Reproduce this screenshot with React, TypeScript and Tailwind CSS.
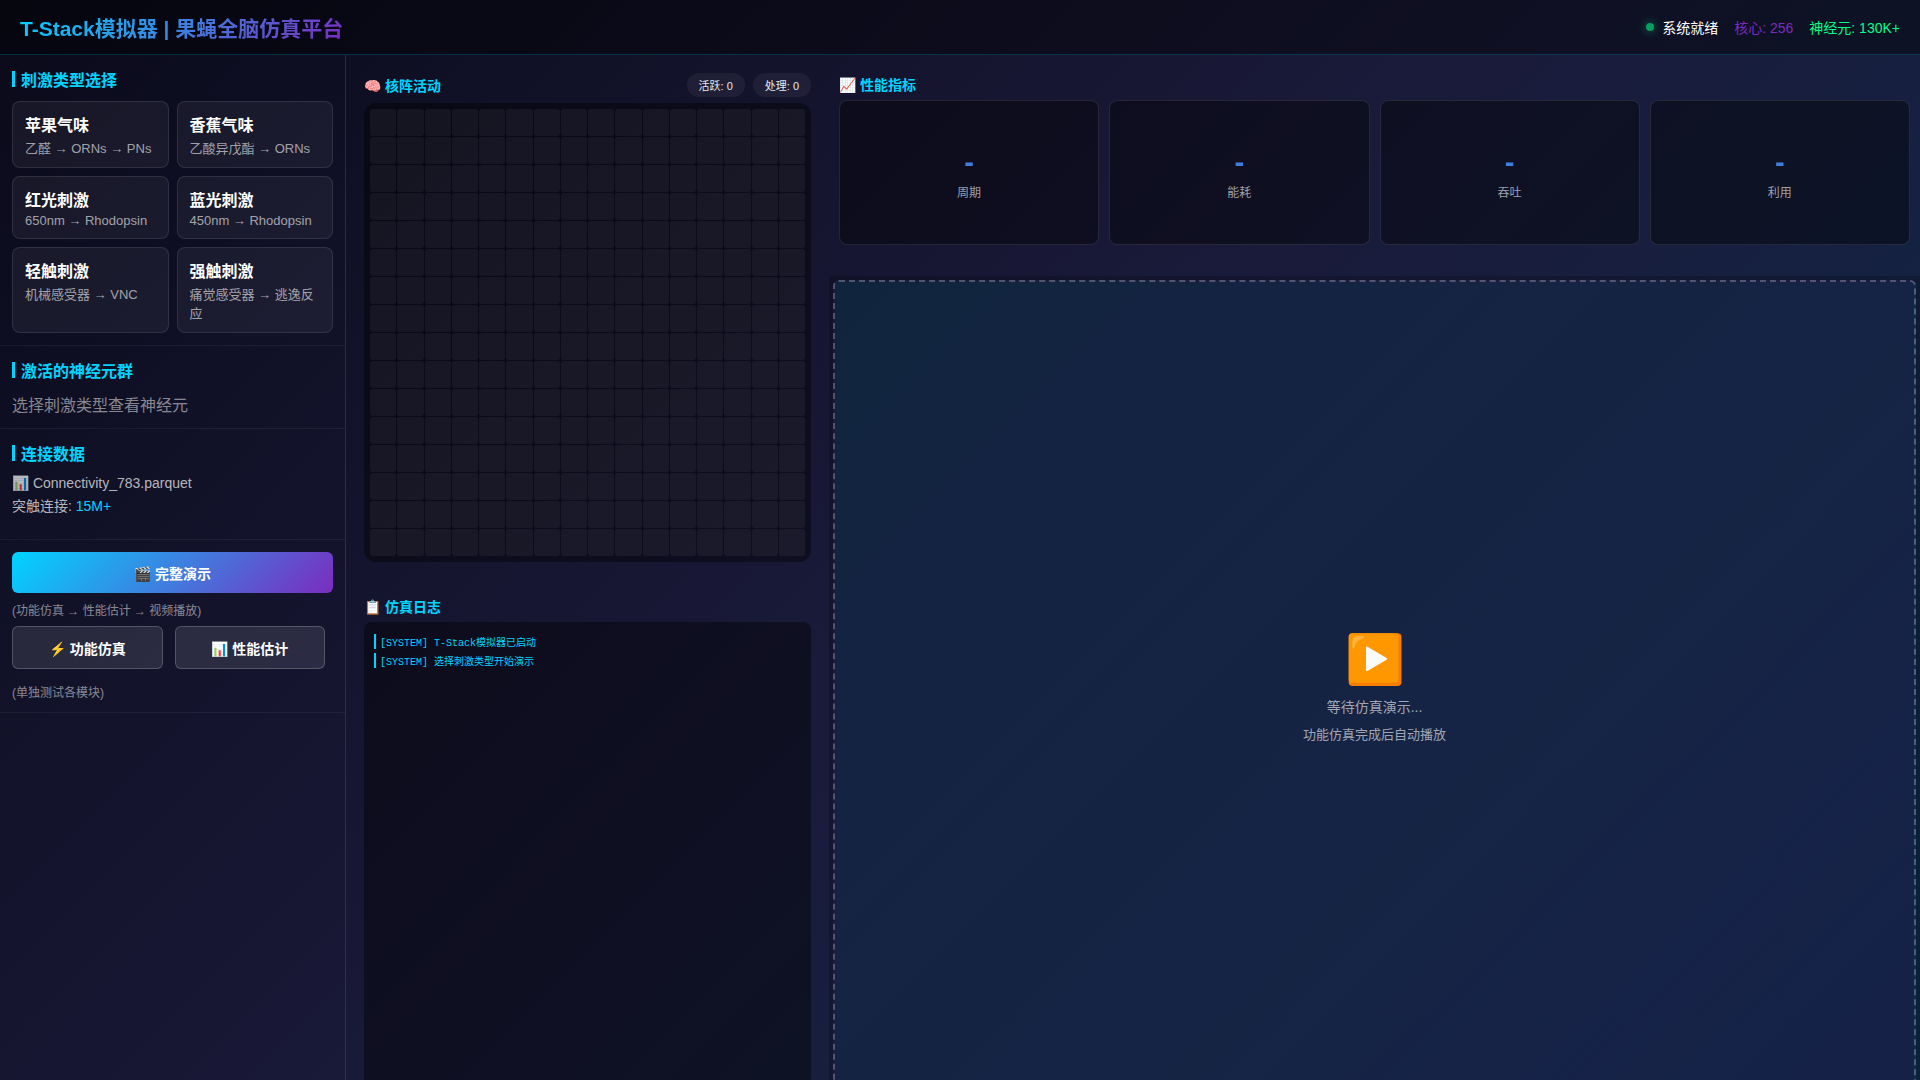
const stimuli = [
  { name: "苹果气味", path: "乙醛 → ORNs → PNs" },
  { name: "香蕉气味", path: "乙酸异戊酯 → ORNs" },
  { name: "红光刺激", path: "650nm → Rhodopsin" },
  { name: "蓝光刺激", path: "450nm → Rhodopsin" },
  { name: "轻触刺激", path: "机械感受器 → VNC" },
  { name: "强触刺激", path: "痛觉感受器 → 逃逸反应" },
];

const metrics = ["周期", "能耗", "吞吐", "利用"];

const logs = ["[SYSTEM] T-Stack模拟器已启动", "[SYSTEM] 选择刺激类型开始演示"];

const cores = Array.from({ length: 256 }, (_, i) => i);

function SectionTitle({ children }: { children: string }) {
  return (
    <h2 className="mb-[10px] flex h-6 items-center gap-[6px] text-[16px] font-bold text-[#00d4ff]">
      <span className="h-4 w-[3px] bg-[#00d4ff]" />
      {children}
    </h2>
  );
}

function Pill({ children }: { children: string }) {
  return (
    <span className="flex h-6 items-center rounded-full bg-white/5 px-3 text-[11px]">
      {children}
    </span>
  );
}

function Sidebar() {
  return (
    <aside className="border-r border-[#00d4ff]/20">
      <section className="border-b border-white/5 p-3">
        <SectionTitle>刺激类型选择</SectionTitle>
        <div className="grid grid-cols-2 gap-2">
          {stimuli.map((s) => (
            <button
              key={s.name}
              className="flex flex-col gap-[2px] rounded-lg border border-white/10 bg-white/5 px-3 py-[10px] text-left"
            >
              <span className="text-[16px] font-bold">{s.name}</span>
              <span className="text-[13px] text-white/60">{s.path}</span>
            </button>
          ))}
        </div>
      </section>

      <section className="border-b border-white/5 p-3">
        <SectionTitle>激活的神经元群</SectionTitle>
        <p className="text-[16px] text-white/50">选择刺激类型查看神经元</p>
      </section>

      <section className="border-b border-white/5 p-3">
        <SectionTitle>连接数据</SectionTitle>
        <div className="pb-3 text-[14px] text-white/70">
          <p className="mb-1">📊 Connectivity_783.parquet</p>
          <p>
            突触连接: <span className="text-[#00d4ff]">15M+</span>
          </p>
        </div>
      </section>

      <section className="border-b border-white/5 p-3">
        <button className="h-[41px] w-full rounded-md bg-[linear-gradient(135deg,#00d4ff,#7b2cbf)] text-[14px] font-bold">
          🎬 完整演示
        </button>
        <p className="mt-2 mb-2 text-[12px] text-white/50">
          (功能仿真 → 性能估计 → 视频播放)
        </p>
        <div className="mr-2 grid grid-cols-2 gap-3">
          <button className="h-[43px] rounded-md border border-white/20 bg-white/10 text-[14px] font-bold">
            ⚡ 功能仿真
          </button>
          <button className="h-[43px] rounded-md border border-white/20 bg-white/10 text-[14px] font-bold">
            📊 性能估计
          </button>
        </div>
        <p className="mt-[14px] text-[12px] text-white/50">(单独测试各模块)</p>
      </section>
    </aside>
  );
}

function CorePanel() {
  return (
    <div className="flex flex-col px-[18px] pt-[18px]">
      <div className="mb-[6px] flex items-center justify-between">
        <h2 className="text-[14px] font-bold text-[#00d4ff]">🧠 核阵活动</h2>
        <div className="flex gap-2 text-white/90">
          <Pill>活跃: 0</Pill>
          <Pill>处理: 0</Pill>
        </div>
      </div>
      <div className="grid grid-cols-16 gap-px rounded-xl bg-black/40 p-[6px]">
        {cores.map((i) => (
          <div key={i} className="h-[27px] rounded-[3px] bg-white/5" />
        ))}
      </div>

      <h2 className="mt-[34px] mb-[6px] text-[14px] font-bold text-[#00d4ff]">
        📋 仿真日志
      </h2>
      <div className="flex-1 rounded-lg bg-black/40 px-[10px] py-3 font-['Liberation_Mono','Noto_Sans_CJK_SC',monospace] text-[10px] text-[#00d4ff]">
        {logs.map((line) => (
          <p key={line} className="mb-1 h-[15px] border-l-2 border-[#00d4ff] pl-1">
            {line}
          </p>
        ))}
      </div>
    </div>
  );
}

function ResultPanel() {
  return (
    <div className="flex flex-col">
      <section className="px-[10px] pt-[19px] pb-[31px]">
        <h2 className="mb-[6px] text-[14px] font-bold text-[#00d4ff]">📈 性能指标</h2>
        <div className="grid grid-cols-4 gap-[10px]">
          {metrics.map((label) => (
            <div
              key={label}
              className="flex h-[145px] flex-col justify-center rounded-lg border border-white/10 bg-black/40 text-center"
            >
              <div className="bg-[linear-gradient(135deg,#00d4ff,#7b2cbf)] bg-clip-text text-[29px] font-bold text-transparent">
                -
              </div>
              <div className="mt-1 text-[12px] text-white/60">{label}</div>
            </div>
          ))}
        </div>
      </section>

      <section className="flex flex-1 flex-col bg-black/20 p-1">
        <div className="flex min-h-[813px] flex-1 flex-col items-center justify-center rounded-md border-2 border-dashed border-white/25 bg-[linear-gradient(135deg,rgba(0,212,255,0.1),rgba(123,44,191,0.1))] text-white/60">
          <div className="text-[48px] text-white">▶️</div>
          <p className="mt-2 text-[14px]">等待仿真演示...</p>
          <p className="mt-2 text-[13px]">功能仿真完成后自动播放</p>
        </div>
      </section>
    </div>
  );
}

export default function App() {
  return (
    <div className="flex h-screen flex-col overflow-hidden bg-[linear-gradient(135deg,#0a0a1a_0%,#1a1a3a_50%,#0f2a4a_100%)] font-['Liberation_Sans','Noto_Sans_CJK_SC',sans-serif] leading-[normal] text-white">
      <header className="flex h-[55px] shrink-0 items-center justify-between border-b border-[#00d4ff]/20 bg-black/40 px-5">
        <h1 className="bg-[linear-gradient(135deg,#00d4ff,#7b2cbf)] bg-clip-text text-[21px] font-bold text-transparent">
          T-Stack模拟器 | 果蝇全脑仿真平台
        </h1>
        <div className="flex items-center gap-4 text-[14px]">
          <span className="flex items-center gap-2">
            <span className="size-2 rounded-full bg-[#00ff88]/60 shadow-[0_0_10px_rgba(0,255,136,0.5)]" />
            系统就绪
          </span>
          <span className="text-[#7b2cbf]">核心: 256</span>
          <span className="text-[#00ff88]">神经元: 130K+</span>
        </div>
      </header>

      <main className="grid flex-1 grid-cols-[346px_483px_minmax(0,1fr)]">
        <Sidebar />
        <CorePanel />
        <ResultPanel />
      </main>
    </div>
  );
}
